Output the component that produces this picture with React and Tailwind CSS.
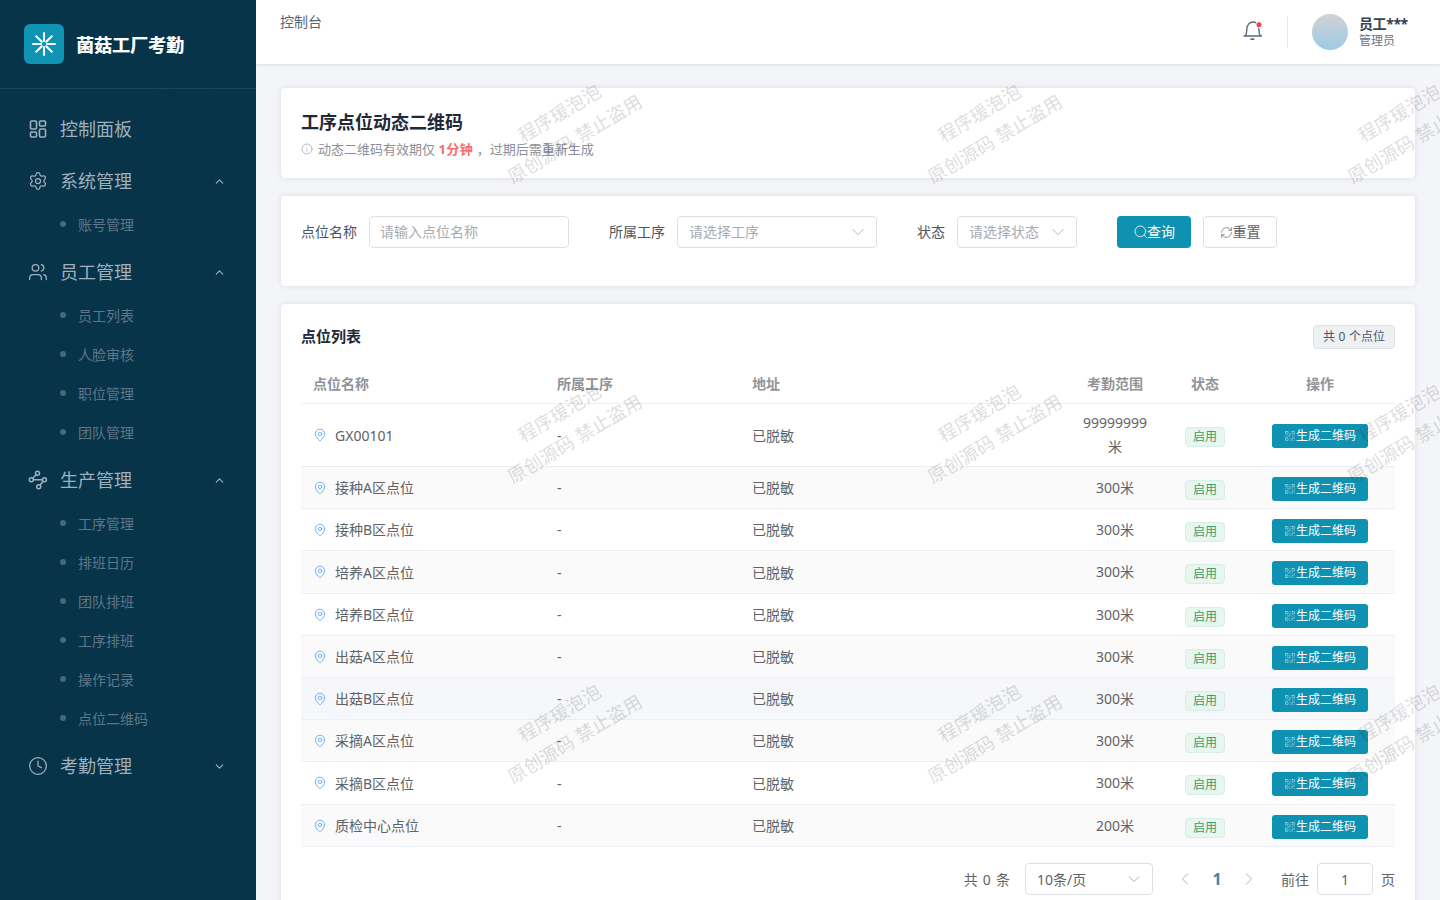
import { ChevronDown, ChevronLeft, ChevronRight, ChevronUp, Clock, Info, MapPin, QrCode, RefreshCw, Search, Settings, Users } from "lucide-react";

const rows = [
  { name: "GX00101", range: "99999999米", tall: true },
  { name: "接种A区点位", range: "300米", h: "h-[42px]" },
  { name: "接种B区点位", range: "300米", h: "h-[42px]" },
  { name: "培养A区点位", range: "300米", h: "h-[43px]" },
  { name: "培养B区点位", range: "300米", h: "h-[42px]" },
  { name: "出菇A区点位", range: "300米", h: "h-[42px]" },
  { name: "出菇B区点位", range: "300米", h: "h-[42px]", hover: true },
  { name: "采摘A区点位", range: "300米", h: "h-[42px]" },
  { name: "采摘B区点位", range: "300米", h: "h-[43px]" },
  { name: "质检中心点位", range: "200米", h: "h-[42px]" },
];

function DashIcon() {
  return (
    <svg width="20" height="20" viewBox="0 0 20 20" fill="none" stroke="currentColor" strokeWidth="1.6" className="shrink-0">
      <rect x="2.5" y="2" width="6" height="8" rx="1" />
      <rect x="11.5" y="2" width="6" height="5" rx="1" />
      <rect x="11.5" y="10" width="6" height="8" rx="1" />
      <rect x="2.5" y="13" width="6" height="5" rx="1" />
    </svg>
  );
}

function FlowIcon() {
  return (
    <svg width="20" height="20" viewBox="0 0 20 20" fill="none" stroke="currentColor" strokeWidth="1.5" className="shrink-0">
      <circle cx="9.5" cy="3.2" r="2" />
      <circle cx="3.3" cy="9.8" r="2" />
      <circle cx="16.4" cy="9.8" r="2" />
      <circle cx="10.7" cy="16.7" r="2" />
      <path d="M8.1 4.7 4.7 8.3M5.3 9.8h9.1M15.1 11.3l-3.1 3.9" />
    </svg>
  );
}

function LogoMark() {
  return (
    <svg width="24" height="24" viewBox="0 0 24 24" fill="none" stroke="white" strokeWidth="2" strokeLinecap="round">
      <path d="M12 1v8M12 15v8M1 12h8M15 12h8M4.2 4.2l5.6 5.6M14.2 14.2l5.6 5.6M19.8 4.2l-5.6 5.6M9.8 14.2l-5.6 5.6" />
    </svg>
  );
}

function BellIcon() {
  return (
    <svg width="30" height="30" viewBox="0 0 30 30" fill="none" stroke="#5b6b80" strokeWidth="1.4" strokeLinecap="round" className="-mt-[4px]">
      <path d="M6 21h17.5M7 20.8c1.4-1 1.7-3 1.7-5.8 0-5 2.8-8 6.3-8 1 0 2 .2 2.8.7M20.7 13.5c.2.8.3 1.5.3 2.5 0 2.4.5 4 1.7 4.8" />
      <path d="M13.2 24.2h2.4" strokeWidth="1.8" />
      <circle cx="21" cy="9.7" r="2.5" fill="#ef4444" stroke="none" />
    </svg>
  );
}

function NavGroup({ icon, label, open, children }) {
  return (
    <div>
      <div className="flex h-[52px] items-center pl-[28px] pr-[30px] text-[#9fb0bf]">
        {icon}
        <span className="ml-[12px] flex-1 text-[18px]">{label}</span>
        {open === undefined ? null : open ? <ChevronUp size={13} /> : <ChevronDown size={13} />}
      </div>
      {children ? <div className="-mt-[2.5px] pb-[2.5px]">{children}</div> : null}
    </div>
  );
}

function SubItem({ label }) {
  return (
    <div className="flex h-[39px] items-center pl-[60px] text-[14px] text-[#5f7689]">
      <span className="h-[6px] w-[6px] rounded-full bg-[#4b6679]" />
      <span className="ml-[12px]">{label}</span>
    </div>
  );
}

function Sidebar() {
  return (
    <aside className="flex w-[256px] shrink-0 flex-col bg-[#08344a]">
      <div className="flex h-[89px] items-center gap-[12px] border-b border-[#1b4a5f] pl-[24px]">
        <div className="flex h-[40px] w-[40px] items-center justify-center rounded-[6px] bg-[#0f94b4]">
          <LogoMark />
        </div>
        <span className="mt-[2px] text-[18px] font-bold text-white [text-shadow:0.5px_0_0_rgba(255,255,255,0.6)]">菌菇工厂考勤</span>
      </div>
      <nav className="pt-[14px]">
        <NavGroup icon={<DashIcon />} label="控制面板" />
        <NavGroup icon={<Settings size={20} strokeWidth={1.5} />} label="系统管理" open>
          <SubItem label="账号管理" />
        </NavGroup>
        <NavGroup icon={<Users size={20} strokeWidth={1.5} />} label="员工管理" open>
          <SubItem label="员工列表" />
          <SubItem label="人脸审核" />
          <SubItem label="职位管理" />
          <SubItem label="团队管理" />
        </NavGroup>
        <NavGroup icon={<FlowIcon />} label="生产管理" open>
          <SubItem label="工序管理" />
          <SubItem label="排班日历" />
          <SubItem label="团队排班" />
          <SubItem label="工序排班" />
          <SubItem label="操作记录" />
          <SubItem label="点位二维码" />
        </NavGroup>
        <NavGroup icon={<Clock size={20} strokeWidth={1.5} />} label="考勤管理" open={false} />
      </nav>
    </aside>
  );
}

function Header() {
  return (
    <header className="flex h-[64px] shrink-0 items-start justify-between bg-white pl-[24px] pr-[32px] shadow-[0_1px_3px_rgba(0,0,0,0.1)]">
      <span className="mt-[11px] text-[14px] text-[#5b6472]">控制台</span>
      <div className="flex items-center pt-[14px]">
        <BellIcon />
        <div className="ml-[19px] h-[32px] w-px bg-[#e5e7eb]" />
        <div className="ml-[24px] h-[36px] w-[36px] rounded-full bg-gradient-to-b from-[#d1d1d3] to-[#9ccbe6]" />
        <div className="ml-[11px] flex w-[49px] flex-col whitespace-nowrap">
          <span className="text-[14px] font-bold leading-[18px] tracking-[-0.4px] text-[#374151]">员工***</span>
          <span className="text-[12px] leading-[16px] text-[#6b7280]">管理员</span>
        </div>
      </div>
    </header>
  );
}

function Field({ label, placeholder, width, select }) {
  return (
    <div className="mr-[40px] flex items-center">
      <span className="mb-[2px] mr-[12px] text-[14px] text-[#4b5563]">{label}</span>
      <div className={`${width} flex h-[32px] items-center justify-between rounded-[4px] border border-[#dcdfe6] pb-[2px] text-[14px] text-[#a8abb2] ${select ? "pl-[11px] pr-[8px]" : "pl-[10px] pr-[12px]"}`}>
        <span>{placeholder}</span>
        {select ? <ChevronDown size={20} strokeWidth={1.1} className="mt-[2px] text-[#a8abb2]" /> : null}
      </div>
    </div>
  );
}

function Row({ row }) {
  const striped = rows.indexOf(row) % 2 === 1;
  return (
    <div className={`flex items-center border-b border-[#ebeef5] text-[14px] text-[#606266] ${row.tall ? "h-[63px]" : row.h} ${row.hover ? "bg-[#f5f7fa]" : striped ? "bg-[#fafafa]" : ""}`}>
      <div className="flex w-[244px] items-center pl-[12px]">
        <MapPin size={14} strokeWidth={1.5} className="text-[#60a5fa]" />
        <span className="ml-[8px]">{row.name}</span>
      </div>
      <div className="w-[195px] pl-[12px]">-</div>
      <div className="w-[325px] pl-[12px]">已脱敏</div>
      <div className="w-[100px] px-[12px] text-center leading-[24px]">
        {row.tall ? (
          <>
            99999999
            <br />米
          </>
        ) : (
          row.range
        )}
      </div>
      <div className="flex w-[80px] justify-center">
        <span className="mt-[4px] flex h-[20px] w-[40px] items-center justify-center rounded-[4px] border border-[#d6efe4] bg-[#e7f6ef] text-[12px] text-[#3f9b70]">启用</span>
      </div>
      <div className="flex w-[150px] justify-center">
        <span className="mt-[2px] flex h-[24px] w-[96px] items-center justify-center rounded-[3px] bg-[#0f91b2] text-[12px] text-white">
          <QrCode size={12} strokeWidth={1.25} className="text-[#bfe3ec]" />
          生成二维码
        </span>
      </div>
    </div>
  );
}

function Watermark() {
  const cells = [];
  for (const top of [126, 426, 726]) {
    for (const left of [147, 567, 987, 1407]) {
      // over the dark sidebar the mark hardly shows
      const tone = left === 147 ? "text-black/[.05]" : "text-black/[.13]";
      cells.push(
        <div key={`${top}-${left}`} className={`absolute w-[180px] -translate-x-1/2 -translate-y-1/2 -rotate-[31deg] whitespace-nowrap text-center text-[18.5px] font-medium leading-[30px] ${tone}`} style={{ top, left }}>
          <div>程序瑗泡泡</div>
          <div>原创源码 禁止盗用</div>
        </div>
      );
    }
  }
  return <div className="pointer-events-none absolute inset-0 overflow-hidden">{cells}</div>;
}

export default function App() {
  return (
    <div className="relative flex h-[900px] overflow-hidden bg-[#f4f5f8] font-['Noto_Sans','Noto_Sans_CJK_SC',sans-serif]">
      <Sidebar />
      <div className="flex min-w-0 flex-1 flex-col">
        <Header />
        <main className="flex flex-col gap-[18px] pl-[25px] pr-[25px] pt-[24px]">
          <section className="h-[90px] rounded-[4px] bg-white px-[20px] pt-[21px] shadow-[0_0_6px_rgba(0,0,0,0.1)]">
            <h1 className="text-[18px] font-bold leading-[26px] text-[#1f2937]">工序点位动态二维码</h1>
            <p className="mt-[4px] flex items-center text-[13px] leading-[20px] text-[#8b8f97]">
              <Info size={12} strokeWidth={1.25} className="mr-[5px]" />
              动态二维码有效期仅&nbsp;<span className="font-bold tracking-[0.5px] text-[#f56c6c]">1分钟</span>&nbsp;，过期后需重新生成
            </p>
          </section>

          <section className="flex h-[90px] items-start rounded-[4px] bg-white px-[20px] pt-[20px] shadow-[0_0_6px_rgba(0,0,0,0.1)]">
            <Field label="点位名称" placeholder="请输入点位名称" width="w-[200px]" />
            <Field label="所属工序" placeholder="请选择工序" width="w-[200px]" select />
            <Field label="状态" placeholder="请选择状态" width="w-[120px]" select />
            <button type="button" className="flex h-[32px] w-[74px] items-center justify-center rounded-[4px] bg-[#0f91b2] pb-[2px] text-[14px] text-white">
              <Search size={16} strokeWidth={1.25} className="-mr-[2px] mt-[2px]" />
              查询
            </button>
            <button type="button" className="ml-[12px] flex h-[32px] w-[74px] items-center justify-center rounded-[4px] border border-[#dcdfe6] bg-white pb-[2px] text-[14px] text-[#606266]">
              <RefreshCw size={13} strokeWidth={1.25} className="mt-[2px]" />
              重置
            </button>
          </section>

          <section className="rounded-[4px] bg-white px-[20px] pt-[21px] shadow-[0_0_6px_rgba(0,0,0,0.1)]">
            <div className="flex h-[24px] items-center justify-between">
              <h2 className="mb-[2px] text-[15px] font-bold text-[#1f2937]">点位列表</h2>
              <span className="rounded-[4px] border border-[#dde2e8] bg-[#eef1f4] px-[9px] py-[2px] text-[12px] leading-[18px] text-[#4b5563] [word-spacing:0.5px]">共 0 个点位</span>
            </div>
            <div className="mt-[15px]">
              <div className="flex h-[40px] items-center border-b border-[#ebeef5] text-[14px] font-bold text-[#909399]">
                <div className="w-[244px] pl-[12px]">点位名称</div>
                <div className="w-[195px] pl-[12px]">所属工序</div>
                <div className="w-[325px] pl-[12px]">地址</div>
                <div className="w-[100px] text-center">考勤范围</div>
                <div className="w-[80px] text-center">状态</div>
                <div className="w-[150px] text-center">操作</div>
              </div>
              {rows.map((row) => (
                <Row key={row.name} row={row} />
              ))}
            </div>
            <div className="flex h-[64px] items-center justify-end text-[14px] text-[#606266]">
              <span className="[word-spacing:1.5px]">共 0 条</span>
              <div className="ml-[15px] flex h-[32px] w-[128px] items-center justify-between rounded-[4px] border border-[#dcdfe6] pl-[11px] pr-[8px]">
                10条/页
                <ChevronDown size={20} strokeWidth={1.1} className="text-[#a8abb2]" />
              </div>
              <ChevronLeft size={20} strokeWidth={1.1} className="ml-[22px] text-[#a8abb2]" />
              <span className="ml-[17.5px] w-[9px] text-[16px] font-bold text-[#3f87a6]">1</span>
              <ChevronRight size={20} strokeWidth={1.1} className="ml-[17.5px] text-[#a8abb2]" />
              <span className="ml-[22px]">前往</span>
              <div className="ml-[8px] flex h-[32px] w-[56px] items-center justify-center rounded-[4px] border border-[#dcdfe6]">1</div>
              <span className="ml-[8px]">页</span>
            </div>
          </section>
        </main>
      </div>
      <Watermark />
    </div>
  );
}
